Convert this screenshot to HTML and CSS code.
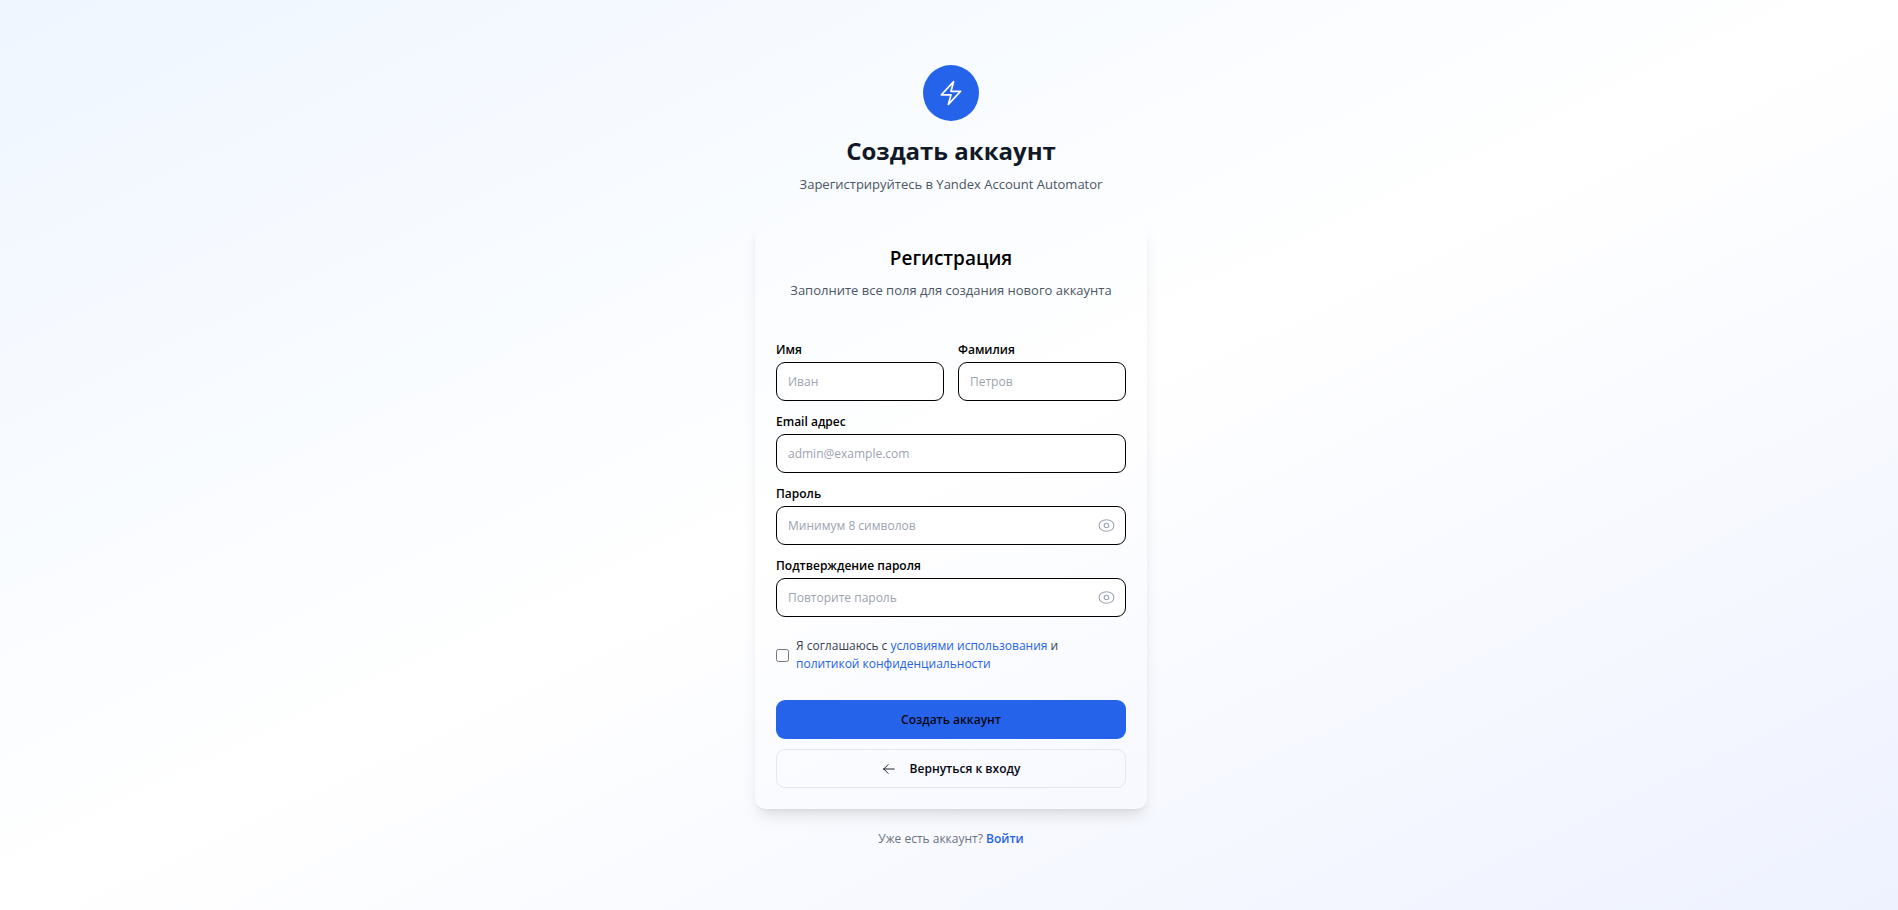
FILE: index.html
```html
<!DOCTYPE html>
<html lang="ru">
<head>
<meta charset="utf-8">
<meta name="viewport" content="width=device-width, initial-scale=1">
<title>Создать аккаунт</title>
<link rel="stylesheet" href="styles.css">
</head>
<body>
<main class="page">
  <div class="column">
    <header class="intro">
      <div class="logo">
        <svg class="logo-icon" viewBox="0 0 24 24" aria-hidden="true"><path d="M3.75 13.5l10.5-11.25L12 10.5h8.25L9.75 21.75 12 13.5H3.75z"/></svg>
      </div>
      <h1 class="intro-title">Создать аккаунт</h1>
      <p class="intro-text">Зарегистрируйтесь в Yandex Account Automator</p>
    </header>
    <section class="card">
      <div class="card-header">
        <h2 class="card-title">Регистрация</h2>
        <p class="card-text">Заполните все поля для создания нового аккаунта</p>
      </div>
      <form class="form">
        <div class="names">
          <div class="field">
            <label class="label" for="first-name">Имя</label>
            <input class="input" id="first-name" type="text" placeholder="Иван">
          </div>
          <div class="field">
            <label class="label" for="last-name">Фамилия</label>
            <input class="input" id="last-name" type="text" placeholder="Петров">
          </div>
        </div>
        <div class="field">
          <label class="label" for="email">Email адрес</label>
          <input class="input" id="email" type="email" placeholder="admin@example.com">
        </div>
        <div class="field">
          <label class="label" for="password">Пароль</label>
          <div class="secret">
            <input class="input input-secret" id="password" type="password" placeholder="Минимум 8 символов">
            <button class="reveal" type="button" aria-label="Показать пароль">
              <svg class="eye" viewBox="0 0 24 24" aria-hidden="true"><path d="M1.5 12C1.5 7.4 6 4 12 4s10.500 3.400 10.500 8S18 20 12 20 1.500 16.600 1.500 12z"/><circle cx="12" cy="12" r="3.200"/></svg>
            </button>
          </div>
        </div>
        <div class="field">
          <label class="label" for="confirm">Подтверждение пароля</label>
          <div class="secret">
            <input class="input input-secret" id="confirm" type="password" placeholder="Повторите пароль">
            <button class="reveal" type="button" aria-label="Показать подтверждение пароля">
              <svg class="eye" viewBox="0 0 24 24" aria-hidden="true"><path d="M1.5 12C1.5 7.4 6 4 12 4s10.500 3.400 10.500 8S18 20 12 20 1.500 16.600 1.500 12z"/><circle cx="12" cy="12" r="3.200"/></svg>
            </button>
          </div>
        </div>
        <div class="consent">
          <input class="check" id="terms" type="checkbox">
          <label class="consent-text" for="terms">Я соглашаюсь с <a class="link" href="#terms">условиями использования</a> и <a class="link nowrap" href="#privacy">политикой конфиденциальности</a></label>
        </div>
        <div class="actions">
          <button class="button button-primary" type="submit">Создать аккаунт</button>
          <button class="button button-outline" type="button">
            <svg class="arrow" viewBox="0 0 24 24" aria-hidden="true"><path d="M10.5 19.5L3 12m0 0l7.5-7.5M3 12h18"/></svg>
            Вернуться к входу
          </button>
        </div>
      </form>
    </section>
    <p class="footer">Уже есть аккаунт? <a class="link link-strong" href="#login">Войти</a></p>
  </div>
</main>
</body>
</html>
```
FILE: styles.css
```css
*, *::before, *::after { box-sizing: border-box; }

body {
  margin: 0;
  font-family: "Open Sans", "Noto Sans", sans-serif;
  font-size: 13px;
  line-height: 21px;
  color: #030712;
}

h1, h2, p { margin: 0; }
button, input { font: inherit; color: inherit; }

.page {
  min-height: 100vh;
  display: flex;
  align-items: center;
  justify-content: center;
  padding: 45px 28px 42px 32px;
  background: linear-gradient(to bottom right, #eff6ff, #fff, #eef2ff);
}

.column { width: 100%; max-width: 392px; }

.intro { text-align: center; margin-bottom: 28px; }
.logo {
  width: 56px;
  height: 56px;
  margin: 0 auto 14px;
  border-radius: 50%;
  background: #2563eb;
  display: flex;
  align-items: center;
  justify-content: center;
}
.logo-icon {
  width: 28px;
  height: 28px;
  fill: none;
  stroke: #fff;
  stroke-width: 1.5;
  stroke-linecap: round;
  stroke-linejoin: round;
}
.intro-title {
  margin-bottom: 7px;
  font-size: 24px;
  line-height: 32px;
  font-weight: 700;
  color: #111827;
}
.intro-text { color: #4b5563; }

.card {
  padding: 21px;
  border-radius: 11px;
  box-shadow: 0 10px 15px -3px rgb(0 0 0 / 10%), 0 4px 6px -4px rgb(0 0 0 / 10%);
}
.card-header { text-align: center; margin-bottom: 42px; }
.card-title {
  margin-bottom: 8px;
  font-size: 19px;
  line-height: 28px;
  font-weight: 600;
  color: #000;
}
.card-text { color: #4b5563; }

.form { display: flex; flex-direction: column; gap: 14px; }
.names { display: grid; grid-template-columns: 1fr 1fr; gap: 14px; }
.field { display: flex; flex-direction: column; gap: 5px; }
.label { font-size: 12px; line-height: 14px; font-weight: 600; color: #000; }
.input {
  width: 100%;
  height: 39px;
  padding: 0 11px;
  border: 1px solid #000;
  border-radius: 9px;
  background: #fff;
  font-size: 12px;
}
.input::placeholder { color: #9ca3af; opacity: 1; }
.secret { position: relative; }
.input-secret { padding-right: 36px; }
.reveal {
  position: absolute;
  top: 0;
  right: 0;
  height: 100%;
  padding: 0 11px 0 0;
  border: 0;
  background: none;
  display: flex;
  align-items: center;
  cursor: pointer;
}
.eye {
  width: 17px;
  height: 17px;
  fill: none;
  stroke: #9ca3af;
  stroke-width: 1.5;
}

.consent { display: flex; align-items: center; gap: 7px; margin-top: 6px; }
.check { width: 13px; height: 13px; margin: 0; flex: none; }
.consent-text { font-size: 12px; line-height: 18px; color: #374151; }
.nowrap { white-space: nowrap; }
.link { color: #2563eb; text-decoration: none; }
.link-strong { font-weight: 600; }

.actions { display: flex; flex-direction: column; gap: 10px; margin-top: 13px; }
.button {
  height: 39px;
  padding: 0 14px;
  border: 1px solid transparent;
  border-radius: 9px;
  display: flex;
  align-items: center;
  justify-content: center;
  gap: 14px;
  font-size: 12px;
  font-weight: 600;
  cursor: pointer;
}
.button-primary { background: #2563eb; }
.button-outline { border-color: #e5e7eb; background: transparent; }
.arrow {
  width: 14px;
  height: 14px;
  fill: none;
  stroke: currentColor;
  stroke-width: 1.5;
  stroke-linecap: round;
  stroke-linejoin: round;
}

.footer {
  margin-top: 21px;
  text-align: center;
  font-size: 12px;
  line-height: 18px;
  color: #6b7280;
}
```
